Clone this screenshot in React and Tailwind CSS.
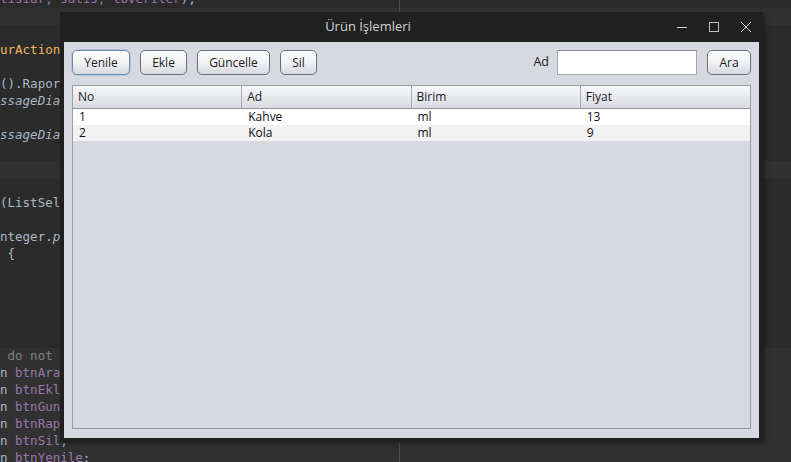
import React from "react";

const purple = "text-[#9876aa]";
const light = "text-[#a9b7c6]";
const orange = "text-[#efb85e]";
const gray = "text-[#7f7f7f]";

// only the part of each line that shows left of the window
const codeLines = [
  { parts: [["tisiar, satis, tbveriler", purple], [");", light]] },
  { band: true },
  {},
  { parts: [["urAction", orange]] },
  {},
  { parts: [["().Rapor", light]] },
  { parts: [["ssageDia", light, true]] },
  {},
  { parts: [["ssageDia", light, true]] },
  {},
  { band: true },
  {},
  { parts: [["(ListSel", light]] },
  {},
  { parts: [["nteger.", light], ["p", light, true]] },
  { parts: [[" {", light]] },
  {},
  {},
  {},
  {},
  {},
  { band: true, parts: [[" do not", gray]] },
  { band: true, parts: [["n ", light], ["btnAra", purple]] },
  { band: true, parts: [["n ", light], ["btnEkl", purple]] },
  { band: true, parts: [["n ", light], ["btnGun", purple]] },
  { band: true, parts: [["n ", light], ["btnRap", purple]] },
  { band: true, parts: [["n ", light], ["btnSil", purple], [",", light]] },
  { band: true, parts: [["n ", light], ["btnYenile", purple], [";", light]] },
];

const rows = [
  ["1", "Kahve", "ml", "13"],
  ["2", "Kola", "ml", "9"],
];

const Button = ({ label, width, focused }) => (
  <button
    type="button"
    className={`h-[25px] ${width} rounded-[5px] border bg-linear-to-b from-[#ffffff] via-[#f1f2f4] to-[#d6d9df] text-[12px] leading-none text-[#1c1c1c] ${
      focused
        ? "border-[#6f89ad] shadow-[0_0_0_1px_#b4c6de]"
        : "border-[#6c6f76]"
    }`}
  >
    {label}
  </button>
);

const App = () => {
  return (
    <div className="relative h-[462px] w-[791px] overflow-hidden bg-[#2b2b2b] font-['DejaVu_Sans_Mono',monospace] text-[12.5px]">
      {/* editor behind the window */}
      <div className="-mt-[9px] flex flex-col">
        {codeLines.map((line, i) => (
          <div
            key={i}
            className={`flex h-[17px] items-center whitespace-pre ${
              line.band ? "bg-[#313131]" : ""
            }`}
          >
            {(line.parts || []).map(([t, c, it], j) => (
              <span key={j} className={`${c} ${it ? "italic" : ""}`}>
                {t}
              </span>
            ))}
          </div>
        ))}
      </div>
      <div className="absolute left-[399px] top-0 h-full w-px bg-[#4e4e4e]" />

      {/* window */}
      <div className="absolute left-[60px] top-[12px] flex h-[430px] w-[703px] flex-col bg-[#202020] font-['Open_Sans',sans-serif] shadow-[2px_2px_5px_rgba(0,0,0,0.35)]">
        <div className="flex h-[30px] items-center">
          <div className="flex w-[616px] justify-center text-[13px] text-[#d2d2d2]">
            Ürün İşlemleri
          </div>
          <div className="ml-px flex items-center gap-[22px]">
            <svg width="10" height="10" viewBox="0 0 10 10">
              <path d="M0 5.5h10" stroke="#cfcfcf" strokeWidth="1" />
            </svg>
            <svg width="10" height="10" viewBox="0 0 10 10">
              <rect x="0.5" y="0.5" width="9" height="9" fill="none" stroke="#bdbdbd" strokeWidth="1" />
            </svg>
            <svg width="10" height="10" viewBox="0 0 10 10">
              <path d="M0 0L10 10M10 0L0 10" stroke="#cfcfcf" strokeWidth="1" />
            </svg>
          </div>
        </div>

        <div className="mx-[4px] mb-[4px] flex flex-1 flex-col bg-[#d6d9e0] px-[8px] pb-[9px] pt-[8px]">
          <div className="flex h-[25px] items-center">
            <div className="flex gap-[10px]">
              <Button label="Yenile" width="w-[58px]" focused />
              <Button label="Ekle" width="w-[47px]" />
              <Button label="Güncelle" width="w-[73px]" />
              <Button label="Sil" width="w-[37px]" />
            </div>
            <div className="ml-auto flex items-center">
              <span className="text-[12.5px] text-[#1c1c1c]">Ad</span>
              <div className="ml-[8px] h-[25px] w-[140px] border border-[#a3a6ac] border-t-[#8d9096] bg-white" />
              <div className="ml-[10px]">
                <Button label="Ara" width="w-[44px]" />
              </div>
            </div>
          </div>

          <div className="mt-[10px] flex flex-1 flex-col border border-[#9a9da4] bg-[#d6d9e0]">
            <div className="grid h-[23px] grid-cols-4 border-b border-[#8f9298] bg-linear-to-b from-[#f7f8fa] to-[#d9dbe1]">
              {["No", "Ad", "Birim", "Fiyat"].map((h, i) => (
                <div
                  key={h}
                  className={`flex items-center pl-[5px] text-[12px] text-[#1c1c1c] ${
                    i < 3 ? "border-r border-[#a9acb2]" : ""
                  }`}
                >
                  {h}
                </div>
              ))}
            </div>
            {rows.map((r, i) => (
              <div
                key={i}
                className={`grid h-[16px] grid-cols-4 ${
                  i % 2 === 0 ? "bg-white" : "bg-[#f2f2f2]"
                }`}
              >
                {r.map((c, j) => (
                  <div key={j} className="flex items-center pl-[6px] text-[12px] leading-none text-[#111]">
                    {c}
                  </div>
                ))}
              </div>
            ))}
          </div>
        </div>
      </div>
    </div>
  );
};

export default App;
